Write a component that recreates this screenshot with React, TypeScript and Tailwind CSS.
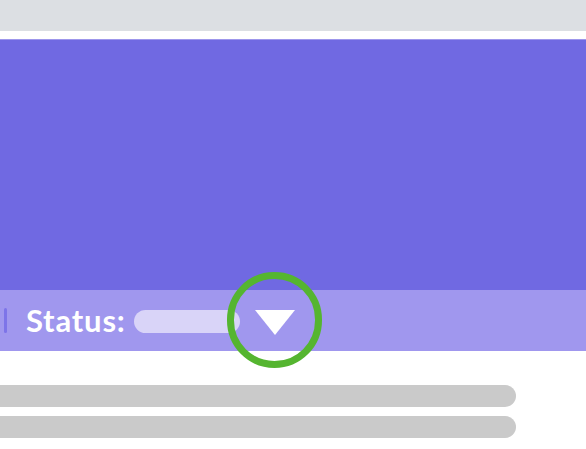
import React from 'react';

// status strip with a dropdown caret, highlighted by a ring marker
function StatusBar() {
    return (
        <div className="relative flex h-[61px] items-center bg-[#a097ee]">
            <span className="ml-[4px] h-[25px] w-[3px] rounded-sm bg-[#7d74e8]" />
            <span
                className="ml-[19px] text-[31px] font-bold leading-none tracking-[0.8px] text-white"
                style={{ fontFamily: '"Lato", "Open Sans", sans-serif' }}
            >
                Status:
            </span>
            <span className="ml-[8px] mt-[1px] h-[23px] w-[106px] rounded-full bg-[#d9d4f8]" />
            <svg className="ml-[15px] mt-[4px]" width="40" height="25" viewBox="0 0 40 25">
                <polygon points="0,0 40,0 20,25" fill="#ffffff" />
            </svg>
            <span className="pointer-events-none absolute left-[227px] top-[-18px] h-[96px] w-[95px] rounded-full border-[7px] border-[#55b530]" />
        </div>
    );
}

export default function App() {
    return (
        <div className="flex h-[449px] w-[586px] flex-col overflow-hidden bg-white">
            <div className="h-[31px] bg-[#dcdfe3]" />
            <div className="h-[8px]" />
            <div className="h-[251px] border-t border-[#9e97ec] bg-[#7069e2]" />
            <StatusBar />
            <div className="flex flex-col gap-[9px] pt-[34px]">
                <div className="h-[22px] w-[516px] rounded-r-full bg-[#cacaca]" />
                <div className="h-[22px] w-[516px] rounded-r-full bg-[#cacaca]" />
            </div>
        </div>
    );
}
